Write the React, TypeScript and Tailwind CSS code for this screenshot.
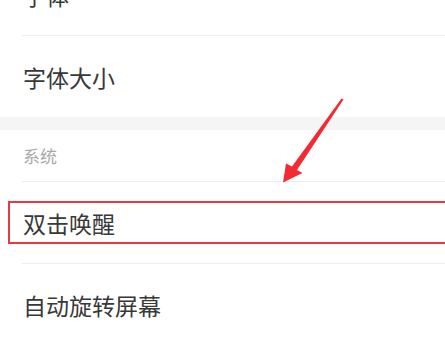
import React from 'react';

const font = { fontFamily: '"Noto Sans CJK SC", "Noto Sans", sans-serif' };

const Row: React.FC<{ label: string; className?: string; children?: React.ReactNode }> = ({
  label,
  className = '',
  children,
}) => (
  <div className={`relative ${className}`}>
    <div className="flex h-[81px] items-center px-[23px] pt-[1px] text-[23px] text-[#383838]">
      {label}
    </div>
    {children}
  </div>
);

const Divider = () => <div className="ml-[22px] h-px bg-[#eeeeee]" />;

export default function App() {
  return (
    <div className="relative h-[339px] w-[445px] overflow-hidden bg-white" style={font}>
      <Row label="字体" className="mt-[-46px]" />
      <Divider />
      <Row label="字体大小" />
      <div className="h-[13px] bg-[#f5f5f5]" />
      <div className="flex h-[51px] items-center px-[23px] text-[17px] text-[#a8a8a8]">系统</div>
      <Divider />
      <Row label="双击唤醒">
        {/* annotation box */}
        <div className="absolute left-[8px] right-[-10px] top-[19px] h-[43px] border-2 border-[#ea3a40]" />
      </Row>
      <Divider />
      <Row label="自动旋转屏幕" />

      {/* annotation arrow */}
      <svg className="pointer-events-none absolute left-0 top-0" width="445" height="339" viewBox="0 0 445 339">
        <polygon
          points="343.5,99.5 297,170 302.5,173 283,182.5 286,163.5 292,166.5 341.5,98.5"
          fill="#f22a33"
        />
      </svg>
    </div>
  );
}
